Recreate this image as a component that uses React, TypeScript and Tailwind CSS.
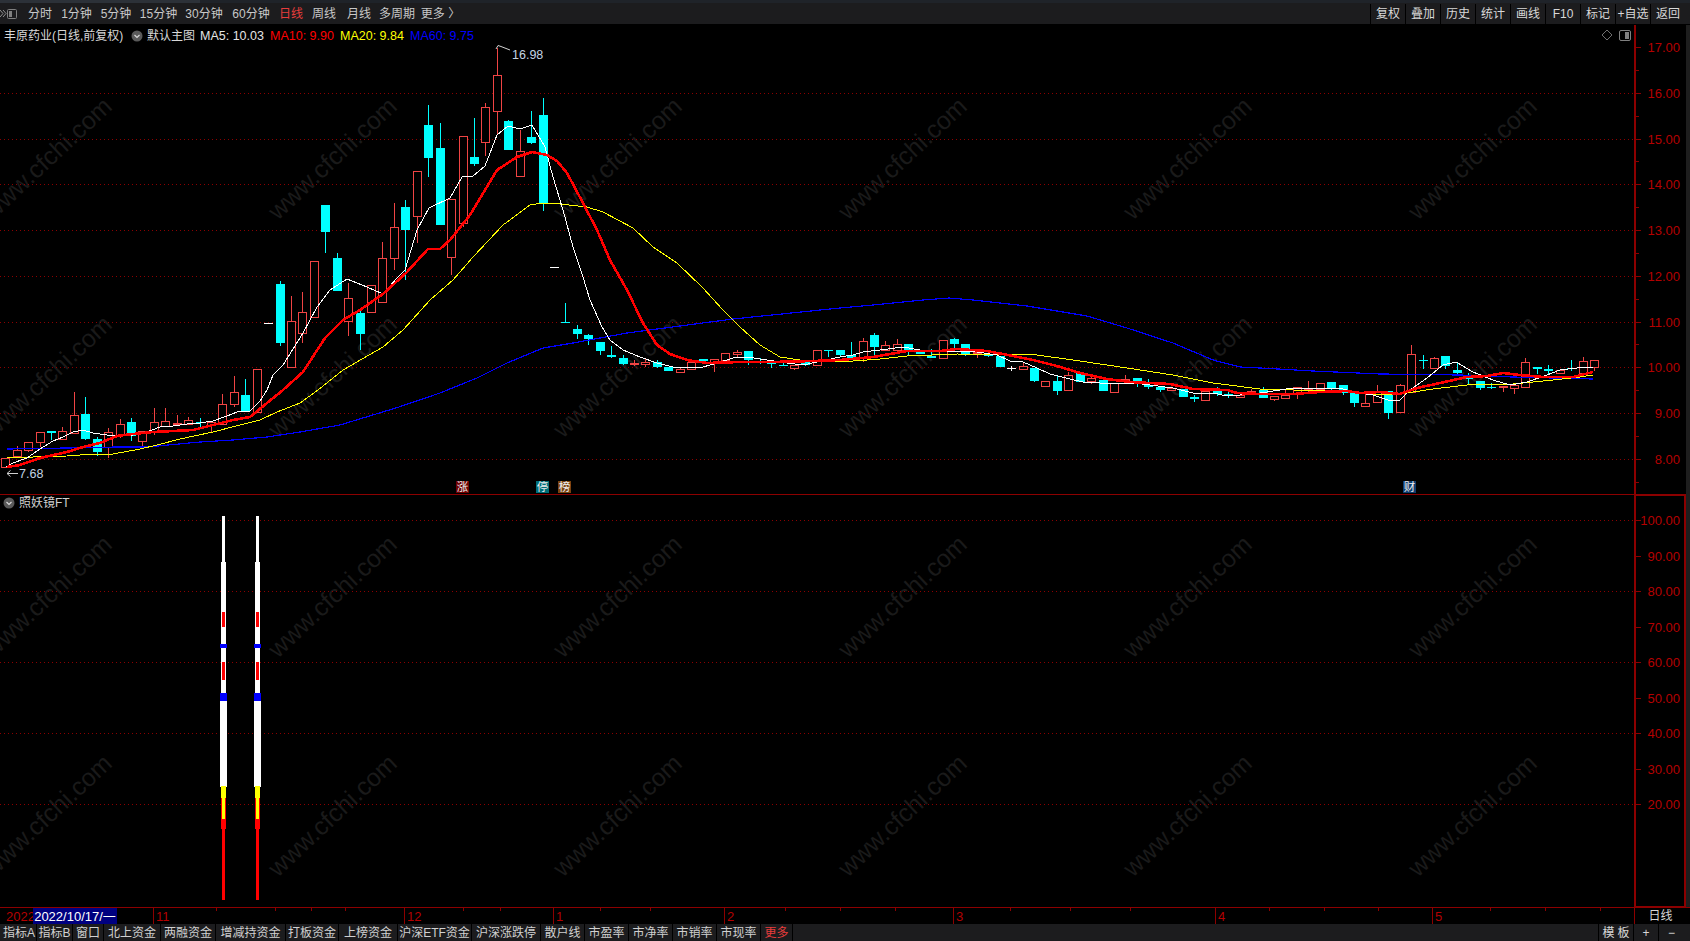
import React from 'react';

type Candle = [number, number, number, number, 'r' | 'c' | 'w'];

// high, body top, body bottom, low (page y pixels), colour
const candles: Candle[] = [
  [458, 458, 467, 467, 'r'], [446, 450, 456, 458, 'r'], [442, 442, 450, 452, 'r'], [432, 432, 442, 447, 'r'],
  [431, 431, 433, 440, 'c'], [427, 431, 439, 439, 'r'], [392, 415, 433, 433, 'r'], [397, 414, 439, 440, 'c'],
  [437, 439, 452, 456, 'c'], [428, 432, 447, 458, 'r'], [419, 424, 435, 438, 'r'], [418, 422, 436, 441, 'c'],
  [431, 431, 441, 446, 'r'], [408, 422, 432, 435, 'r'], [408, 421, 426, 426, 'r'], [415, 423, 424, 426, 'r'],
  [417, 420, 424, 425, 'r'], [418, 422, 423, 427, 'c'], [422, 422, 425, 432, 'r'], [394, 404, 424, 424, 'r'],
  [376, 392, 404, 407, 'r'], [379, 395, 411, 411, 'c'], [369, 369, 412, 412, 'r'], [323, 323, 324, 324, 'w'],
  [281, 284, 343, 346, 'c'], [296, 321, 367, 367, 'r'], [292, 312, 333, 343, 'r'], [261, 261, 317, 317, 'r'],
  [205, 205, 232, 253, 'c'], [253, 258, 291, 291, 'c'], [283, 298, 321, 336, 'r'], [311, 313, 334, 350, 'c'],
  [285, 285, 312, 312, 'r'], [242, 258, 302, 302, 'r'], [203, 227, 258, 270, 'r'], [200, 207, 230, 280, 'c'],
  [171, 171, 216, 243, 'r'], [105, 125, 158, 177, 'c'], [123, 148, 225, 225, 'c'], [199, 199, 257, 275, 'r'],
  [136, 136, 223, 227, 'r'], [118, 157, 164, 166, 'c'], [103, 107, 142, 156, 'r'], [48, 75, 111, 134, 'r'],
  [120, 121, 150, 150, 'c'], [130, 151, 176, 177, 'r'], [111, 137, 143, 144, 'c'], [98, 115, 203, 211, 'c'],
  [267, 267, 268, 268, 'w'], [303, 322, 323, 323, 'c'], [325, 329, 334, 339, 'c'], [334, 335, 339, 345, 'c'],
  [342, 342, 351, 355, 'c'], [346, 355, 357, 358, 'c'], [355, 358, 364, 365, 'c'], [360, 363, 364, 366, 'r'],
  [359, 362, 364, 367, 'r'], [360, 362, 367, 368, 'c'], [367, 367, 371, 371, 'c'], [367, 369, 372, 372, 'r'],
  [362, 362, 369, 369, 'r'], [359, 359, 361, 362, 'c'], [359, 359, 363, 372, 'r'], [353, 353, 360, 360, 'r'],
  [350, 352, 354, 357, 'r'], [351, 351, 360, 365, 'c'], [358, 362, 363, 364, 'c'], [360, 363, 364, 368, 'c'],
  [361, 365, 366, 366, 'c'], [365, 365, 368, 370, 'r'], [361, 361, 365, 366, 'c'], [350, 350, 365, 365, 'r'],
  [350, 350, 351, 357, 'c'], [350, 350, 355, 356, 'c'], [342, 355, 359, 359, 'c'], [338, 341, 358, 362, 'r'],
  [333, 335, 347, 355, 'c'], [341, 345, 350, 350, 'r'], [339, 344, 350, 353, 'r'], [344, 344, 352, 355, 'c'],
  [351, 351, 354, 354, 'c'], [349, 356, 358, 358, 'c'], [340, 340, 358, 358, 'r'], [338, 339, 344, 348, 'c'],
  [344, 344, 354, 356, 'c'], [350, 352, 353, 358, 'r'], [352, 354, 356, 357, 'c'], [356, 356, 367, 367, 'c'],
  [366, 368, 369, 371, 'w'], [363, 366, 369, 369, 'r'], [368, 368, 381, 382, 'c'], [381, 381, 386, 386, 'r'],
  [376, 381, 391, 395, 'c'], [372, 375, 390, 390, 'r'], [373, 373, 382, 382, 'c'], [376, 378, 381, 384, 'r'],
  [380, 380, 391, 391, 'c'], [383, 383, 392, 392, 'r'], [375, 379, 381, 383, 'r'], [378, 378, 383, 387, 'c'],
  [379, 385, 387, 389, 'c'], [387, 387, 390, 392, 'c'], [388, 388, 390, 391, 'r'], [389, 389, 397, 397, 'c'],
  [395, 397, 399, 402, 'c'], [391, 391, 400, 400, 'r'], [387, 390, 394, 396, 'c'], [392, 394, 395, 398, 'c'],
  [395, 395, 397, 398, 'r'], [389, 391, 394, 394, 'r'], [387, 390, 398, 398, 'c'], [396, 396, 399, 401, 'r'],
  [389, 395, 398, 398, 'r'], [387, 387, 394, 399, 'r'], [381, 388, 389, 392, 'r'], [383, 383, 389, 389, 'r'],
  [382, 382, 388, 392, 'c'], [385, 385, 393, 395, 'c'], [393, 393, 403, 407, 'c'], [394, 403, 406, 406, 'r'],
  [385, 392, 402, 402, 'r'], [391, 391, 413, 419, 'c'], [384, 385, 412, 412, 'r'], [345, 354, 392, 392, 'r'],
  [355, 360, 361, 369, 'c'], [357, 358, 368, 368, 'r'], [356, 356, 366, 369, 'c'], [363, 370, 373, 375, 'c'],
  [373, 376, 379, 384, 'c'], [381, 381, 388, 390, 'c'], [383, 387, 388, 389, 'c'], [386, 386, 387, 392, 'r'],
  [385, 385, 388, 394, 'r'], [358, 362, 387, 387, 'r'], [367, 367, 369, 374, 'c'], [365, 369, 371, 374, 'c'],
  [370, 370, 373, 373, 'r'], [360, 368, 369, 371, 'c'], [357, 361, 373, 373, 'r'], [360, 360, 367, 371, 'r'],
];

const ma5 = '6,467 13,463 27,458 40,449 53,441 63,437 73,432 83,430 93,433 107,435 120,435 133,435 147,432 160,427 173,426 187,424 200,423 213,421 227,416 237,412 250,411 260,401 267,390 273,375 283,365 303,333 317,307 330,290 347,279 367,287 383,294 397,278 405,270 417,230 429,208 450,198 462,177 473,176 485,166 497,135 508,126 520,129 532,125 545,147 553,177 563,210 573,247 583,277 590,300 602,327 610,340 623,350 640,357 657,363 673,367 703,367 717,363 733,358 747,357 767,360 787,363 803,365 817,362 840,357 853,355 863,352 880,350 903,347 920,350 940,351 957,351 977,352 997,355 1010,361 1023,362 1037,368 1050,374 1070,379 1083,382 1100,383 1117,383 1133,383 1150,385 1173,388 1193,393 1213,393 1227,396 1240,395 1260,393 1293,388 1320,388 1340,388 1353,392 1373,395 1388,400 1400,400 1410,390 1427,378 1443,365 1456,362 1473,372 1493,380 1510,385 1527,382 1547,375 1560,370 1577,368 1593,367';
const ma10 = '7,467 20,465 40,458 67,452 83,447 100,443 117,436 133,434 153,432 173,431 193,430 213,425 233,420 250,417 267,403 283,390 303,372 325,338 343,320 360,310 383,294 407,272 428,249 440,249 450,240 470,215 497,170 517,157 532,152 547,155 557,161 567,173 583,203 597,230 610,260 627,290 643,323 657,345 670,354 687,360 707,363 740,362 773,362 813,361 840,360 873,357 907,351 940,351 957,349 987,351 1013,356 1033,360 1057,366 1080,373 1107,379 1130,382 1170,384 1193,389 1227,390 1237,393 1260,394 1293,394 1320,392 1347,391 1360,393 1380,392 1400,394 1417,388 1440,383 1467,377 1487,376 1503,373 1520,375 1543,377 1573,377 1593,372';
const ma20 = '7,457 33,457 67,456 93,454 113,454 140,449 157,445 180,439 213,432 240,425 260,420 277,412 300,403 318,390 343,370 383,347 403,330 430,300 453,280 473,257 503,225 530,205 543,203 560,204 587,207 603,212 633,228 653,247 677,263 703,288 723,310 740,327 760,345 780,357 800,360 840,362 880,359 907,356 957,354 1037,355 1073,360 1127,368 1173,375 1213,383 1260,389 1293,390 1347,391 1373,394 1400,394 1433,389 1467,385 1513,384 1553,380 1580,377 1593,375';
const ma60 = '7,449 67,448 117,447 147,447 200,442 233,440 267,437 300,432 340,425 399,407 440,393 477,378 507,363 543,348 573,343 627,333 733,319 840,308 873,305 923,300 949,298 973,300 1027,306 1087,316 1127,328 1173,343 1213,360 1240,367 1260,368 1313,371 1380,374 1460,375 1513,377 1593,379';

const priceGrid = [93, 139, 184, 230, 276, 322, 367, 413, 459];
const priceLabels = ['17.00', '16.00', '15.00', '14.00', '13.00', '12.00', '11.00', '10.00', '9.00', '8.00'];
const priceTicks = [47, ...priceGrid];

const subGrid = [520, 591, 662, 733, 804];
const subLabels: [string, number][] = [
  ['100.00', 520], ['90.00', 556], ['80.00', 591], ['70.00', 627], ['60.00', 662],
  ['50.00', 698], ['40.00', 733], ['30.00', 769], ['20.00', 804],
];

const wmCols = [47, 332, 617, 902, 1187, 1472];

// center offset is half the bar width
const barParts: [number, number, number, string][] = [
  [3, 516, 562, '#ffffff'], [5, 562, 693, '#ffffff'], [3, 612, 627, '#ff0000'], [7, 644, 648, '#0000ff'],
  [3, 662, 680, '#ff0000'], [7, 693, 701, '#0000ff'], [7, 701, 787, '#ffffff'], [5, 786, 798, '#ffff00'],
  [5, 798, 829, '#ff0000'], [3, 798, 819, '#ffff00'], [3, 829, 900, '#ff0000'],
];

const flags: [number, string, string][] = [
  [456, '涨', '#6e0000'], [536, '停', '#006e78'], [558, '榜', '#7a4210'], [1403, '财', '#0f3c6e'],
];

const leftTabs = [
  { label: '分时', cls: 'w-[34px] text-[#c8c8c8]' },
  { label: '1分钟', cls: 'w-[39px] text-[#c8c8c8]' },
  { label: '5分钟', cls: 'w-[40px] text-[#c8c8c8]' },
  { label: '15分钟', cls: 'w-[45px] text-[#c8c8c8]' },
  { label: '30分钟', cls: 'w-[46px] text-[#c8c8c8]' },
  { label: '60分钟', cls: 'w-[48px] text-[#c8c8c8]' },
  { label: '日线', cls: 'w-[32px] text-[#e83c3c]' },
  { label: '周线', cls: 'w-[34px] text-[#c8c8c8]' },
  { label: '月线', cls: 'w-[36px] text-[#c8c8c8]' },
  { label: '多周期', cls: 'w-[40px] text-[#c8c8c8]' },
  { label: '更多 〉', cls: 'w-[47px] text-[#c8c8c8]' },
];

const rightTabs = ['复权', '叠加', '历史', '统计', '画线', 'F10', '标记', '+自选', '返回'];

const bottomTabs = [
  { label: '指标A', cls: 'w-[35px] text-[#d0d0d0]' },
  { label: '指标B', cls: 'w-[36px] text-[#d0d0d0]' },
  { label: '窗口', cls: 'w-[31px] text-[#d0d0d0]' },
  { label: '北上资金', cls: 'w-[57px] text-[#d0d0d0]' },
  { label: '两融资金', cls: 'w-[55px] text-[#d0d0d0]' },
  { label: '增减持资金', cls: 'w-[70px] text-[#d0d0d0]' },
  { label: '打板资金', cls: 'w-[53px] text-[#d0d0d0]' },
  { label: '上榜资金', cls: 'w-[59px] text-[#d0d0d0]' },
  { label: '沪深ETF资金', cls: 'w-[74px] text-[#d0d0d0]' },
  { label: '沪深涨跌停', cls: 'w-[69px] text-[#d0d0d0]' },
  { label: '散户线', cls: 'w-[44px] text-[#d0d0d0]' },
  { label: '市盈率', cls: 'w-[44px] text-[#d0d0d0]' },
  { label: '市净率', cls: 'w-[44px] text-[#d0d0d0]' },
  { label: '市销率', cls: 'w-[44px] text-[#d0d0d0]' },
  { label: '市现率', cls: 'w-[44px] text-[#d0d0d0]' },
  { label: '更多', cls: 'w-[32px] text-[#e83c3c]' },
];

const monthTicks: [number, string][] = [[153, '11'], [404, '12'], [553, '1'], [724, '2'], [953, '3'], [1215, '4'], [1432, '5']];
const weekTicks = [100, 216, 275, 311, 345, 463, 500, 600, 650, 785, 840, 895, 1010, 1070, 1130, 1269, 1324, 1378, 1490, 1545, 1600];

const candleX = (i: number) => Math.round(5.3 + 11.43 * i);

const Watermark = ({ rows }: { rows: number[] }) => (
  <g fill="#1a1a1a" fontSize="25" textAnchor="middle">
    {rows.flatMap((y) =>
      wmCols.map((x) => (
        <text key={`${x}-${y}`} x={x} y={y + 9} transform={`rotate(-43 ${x} ${y})`}>
          www.cfchi.com
        </text>
      )),
    )}
  </g>
);

const Chevron = () => (
  <svg width="12" height="12" viewBox="0 0 12 12" className="shrink-0">
    <circle cx="6" cy="6" r="5.5" fill="#5a5a5a" />
    <path d="M3.5 5 L6 7.5 L8.5 5" fill="none" stroke="#d8d8d8" strokeWidth="1.2" />
  </svg>
);

const Candles = () => (
  <g shapeRendering="crispEdges">
    {candles.map(([high, top, bottom, low, kind], i) => {
      const x = candleX(i);
      if (kind === 'w') {
        return (
          <g key={i} stroke="#ffffff">
            <line x1={x - 4} x2={x + 5} y1={top + 0.5} y2={top + 0.5} />
            {low > high + 1 && <line x1={x + 0.5} x2={x + 0.5} y1={high} y2={low} />}
          </g>
        );
      }
      const color = kind === 'r' ? '#f04444' : '#00ffff';
      return (
        <g key={i}>
          <line x1={x + 0.5} x2={x + 0.5} y1={high} y2={low} stroke={color} />
          {kind === 'r' ? (
            <>
              <rect x={x - 3.5} y={top + 0.5} width="8" height={Math.max(bottom - top, 1)} fill="#000000" stroke={color} />
              <line x1={x + 0.5} x2={x + 0.5} y1={high} y2={top} stroke={color} />
            </>
          ) : (
            <rect x={x - 4} y={top} width="9" height={Math.max(bottom - top, 1)} fill={color} />
          )}
        </g>
      );
    })}
  </g>
);

const MainPane = () => (
  <div className="relative h-[469px] w-full">
    <svg viewBox="0 25 1686 469" className="block h-[469px] w-[1686px]">
      <Watermark rows={[158, 376]} />
      <g stroke="#8c0000" strokeDasharray="1 3" shapeRendering="crispEdges">
        {priceGrid.map((y) => (
          <line key={y} x1="0" x2="1634" y1={y + 0.5} y2={y + 0.5} />
        ))}
      </g>
      <Candles />
      <g fill="none" shapeRendering="crispEdges">
        <polyline points={ma60} stroke="#0000ff" strokeWidth="1.2" />
        <polyline points={ma20} stroke="#ffff00" strokeWidth="1" />
        <polyline points={ma5} stroke="#ffffff" strokeWidth="1" />
        <polyline points={ma10} stroke="#ff0000" strokeWidth="2.6" />
      </g>
      <path d="M496 49 L498 45.5 L501 46.5 L510 50" fill="none" stroke="#d0d0d0" />
      <text x="512" y="59" fontSize="12.5" fill="#c4d4e4">16.98</text>
      <path d="M18 473.5 H7 M7 473.5 L10.5 470.5 M7 473.5 L10.5 476.5" fill="none" stroke="#d0d0d0" />
      <text x="19" y="478" fontSize="12.5" fill="#c4d4e4">7.68</text>
      {flags.map(([x, ch, bg]) => (
        <g key={ch}>
          <rect x={x} y="481" width="13" height="12" fill={bg} />
          <text x={x + 6.5} y="491" fontSize="11.5" textAnchor="middle" fill="#f0f0f0">{ch}</text>
        </g>
      ))}
      <g stroke="#8c0000" shapeRendering="crispEdges">
        <line x1="1634.5" x2="1634.5" y1="25" y2="494" strokeWidth="2" />
        {priceTicks.map((y) => (
          <line key={y} x1="1635" x2="1641" y1={y + 0.5} y2={y + 0.5} />
        ))}
        {priceGrid.map((y) => (
          <line key={y} x1="1635" x2="1639" y1={y - 22.5} y2={y - 22.5} />
        ))}
        <line x1="1635" x2="1639" y1="482.5" y2="482.5" />
      </g>
      <g fontSize="13" fill="#b40000" textAnchor="end">
        {priceLabels.map((label, i) => (
          <text key={label} x="1680" y={priceTicks[i] + 5}>{label}</text>
        ))}
      </g>
      <path d="M1607 30 L1612 35 L1607 40 L1602 35 Z" fill="none" stroke="#707070" />
      <rect x="1619.5" y="30.5" width="11" height="10" rx="1.5" fill="none" stroke="#808080" />
      <rect x="1625" y="32" width="4" height="7" fill="#808080" />
    </svg>
    <div className="absolute left-[4px] top-[2px] flex h-[18px] items-center text-[12.5px] leading-none">
      <span className="w-[127px] text-[12px] text-[#d8d8d8]">丰原药业(日线,前复权)</span>
      <Chevron />
      <span className="ml-[4px] w-[53px] text-[12px] text-[#d8d8d8]">默认主图</span>
      <span className="w-[70px] text-[#e4e4e4]">MA5: 10.03</span>
      <span className="w-[70px] text-[#ff0000]">MA10: 9.90</span>
      <span className="w-[70px] text-[#ffff00]">MA20: 9.84</span>
      <span className="text-[#0000ff]">MA60: 9.75</span>
    </div>
  </div>
);

const SubPane = () => (
  <div className="relative h-[413px] w-full">
    <svg viewBox="0 494 1686 413" className="block h-[413px] w-[1686px]">
      <Watermark rows={[596, 815]} />
      <g stroke="#8c0000" strokeDasharray="1 3" shapeRendering="crispEdges">
        {subGrid.map((y) => (
          <line key={y} x1="0" x2="1634" y1={y + 0.5} y2={y + 0.5} />
        ))}
      </g>
      <g shapeRendering="crispEdges">
        {[224, 258].map((cx) =>
          barParts.map(([w, y1, y2, fill], i) => (
            <rect key={`${cx}-${i}`} x={cx - (w + 1) / 2} y={y1} width={w} height={y2 - y1} fill={fill} />
          )),
        )}
      </g>
      <g fill="none" stroke="#8c0000" strokeWidth="2" shapeRendering="crispEdges">
        <line x1="0" x2="1686" y1="494.5" y2="494.5" strokeWidth="1.5" />
        <rect x="1634.5" y="495" width="50" height="412" />
      </g>
      <g stroke="#8c0000" shapeRendering="crispEdges">
        {subLabels.map(([label, y]) => (
          <line key={label} x1="1635" x2="1641" y1={y + 0.5} y2={y + 0.5} />
        ))}
      </g>
      <g fontSize="13" fill="#b40000" textAnchor="end">
        {subLabels.map(([label, y]) => (
          <text key={label} x="1680" y={y + 5}>{label}</text>
        ))}
      </g>
    </svg>
    <div className="absolute left-[3px] top-[3px] flex h-[12px] items-center gap-[4px] text-[12px] leading-none text-[#d0d0d0]">
      <Chevron />
      <span>照妖镜FT</span>
    </div>
  </div>
);

const TimeAxis = () => (
  <div className="relative flex h-[17px] w-[1690px] border-t border-[#8c0000]">
    <svg viewBox="0 908 1635 16" className="block h-[16px] w-[1635px]">
      <g stroke="#8c0000" shapeRendering="crispEdges">
        {monthTicks.map(([x]) => (
          <line key={x} x1={x + 0.5} x2={x + 0.5} y1="908" y2="924" />
        ))}
        {weekTicks.map((x) => (
          <line key={x} x1={x + 0.5} x2={x + 0.5} y1="908" y2="911" />
        ))}
        <line x1="1634.5" x2="1634.5" y1="908" y2="924" />
      </g>
      <g fontSize="13" fill="#b40000">
        <text x="6" y="921">2022</text>
        {monthTicks.map(([x, label]) => (
          <text key={x} x={x + 3} y="921">{label}</text>
        ))}
      </g>
    </svg>
    <div className="flex w-[51px] items-center justify-center text-[12px] leading-none text-[#d8d8d8]">日线</div>
    <div className="absolute left-[33px] top-0 flex h-[16px] w-[84px] items-center justify-center bg-[#000080] text-[13px] leading-none text-white">
      2022/10/17/一
    </div>
  </div>
);

const App = () => (
  <div className="flex h-[941px] w-[1690px] flex-col overflow-hidden bg-black font-['Liberation_Sans','Noto_Sans_CJK_SC',sans-serif]">
    <div className="flex h-[3px] shrink-0">
      <div className="w-[200px] bg-[#2c3138]" />
      <div className="flex-1 bg-[#1f2329]" />
    </div>
    <div className="flex h-[22px] shrink-0 items-stretch justify-between border-b border-black bg-[#1c1c1e] text-[12px] leading-none">
      <div className="flex items-center pt-px">
        <svg width="23" height="21" viewBox="0 0 23 21" className="shrink-0">
          <path d="M0 6 L3 9.5 L0 13 M3 6 L6 9.5 L3 13" fill="none" stroke="#909090" />
          <rect x="7.5" y="5.5" width="9" height="9" rx="1" fill="none" stroke="#808080" />
          <rect x="9" y="7" width="3" height="6" fill="#808080" />
        </svg>
        {leftTabs.map((tab) => (
          <span key={tab.label} className={`text-center ${tab.cls}`}>{tab.label}</span>
        ))}
      </div>
      <div className="mr-[5px] flex items-stretch pt-px">
        {rightTabs.map((tab) => (
          <span key={tab} className="flex w-[35px] items-center justify-center border-l border-black text-[#d8d8d8]">{tab}</span>
        ))}
      </div>
    </div>
    <div className="flex h-[882px] shrink-0">
      <div className="flex w-[1686px] flex-col">
        <MainPane />
        <SubPane />
      </div>
      <div className="flex-1 bg-[#1e1e1e]" />
    </div>
    <TimeAxis />
    <div className="flex h-[17px] shrink-0 items-stretch justify-between bg-[#1c1c1e] text-[12px] leading-none">
      <div className="flex items-stretch pl-[2px]">
        {bottomTabs.map((tab) => (
          <span key={tab.label} className={`flex items-center justify-center border-r border-black ${tab.cls}`}>{tab.label}</span>
        ))}
      </div>
      <div className="mr-[6px] flex items-stretch text-[#d8d8d8]">
        <span className="flex w-[36px] items-center justify-center gap-[3px] border-x border-black">
          <span>模</span>
          <span>板</span>
        </span>
        <span className="flex w-[25px] items-center justify-center border-r border-black">+</span>
        <span className="flex w-[25px] items-center justify-center">−</span>
      </div>
    </div>
  </div>
);

export default App;
